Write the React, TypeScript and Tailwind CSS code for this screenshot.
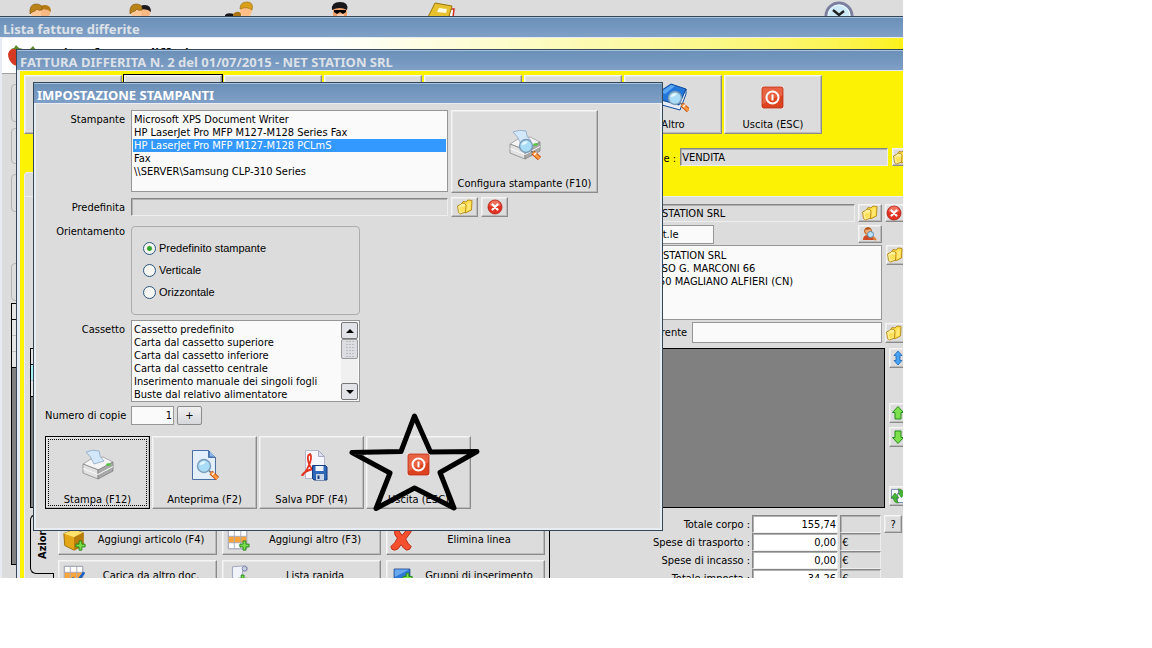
import type { ReactNode } from 'react'
import { clsx } from 'clsx'
import { useState } from 'react'

const PRINTERS = [
  'Microsoft XPS Document Writer',
  'HP LaserJet Pro MFP M127-M128 Series Fax',
  'HP LaserJet Pro MFP M127-M128 PCLmS',
  'Fax',
  '\\\\SERVER\\Samsung CLP-310 Series',
]

const TRAYS = [
  'Cassetto predefinito',
  'Carta dal cassetto superiore',
  'Carta dal cassetto inferiore',
  'Carta dal cassetto centrale',
  'Inserimento manuale dei singoli fogli',
  'Buste dal relativo alimentatore',
]

const ORIENTATIONS = ['Predefinito stampante', 'Verticale', 'Orizzontale']

const TOTALS = [
  { label: 'Totale corpo :', value: '155,74', unit: '' },
  { label: 'Spese di trasporto :', value: '0,00', unit: '€' },
  { label: 'Spese di incasso :', value: '0,00', unit: '€' },
  { label: 'Totale imposta :', value: '34,26', unit: '€' },
]

/* ---------- icons ---------- */

function FolderIcon() {
  return (
    <svg viewBox="0 0 16 16" className="size-4 shrink-0">
      <path d="M4.500 5L6 2.500l3 .5 2-2 4 .5-.5 9.500-6 3z" fill="#ffdc4a" stroke="#b5860f" strokeWidth=".9" />
      <path d="M.5 7l3-1.500L5 4l2.500.5L9 6l-.5 7-5 2-2-1.500z" fill="#fff09a" stroke="#b5860f" strokeWidth=".9" />
      <path d="M2.500 8.500L8 7v5l-4.500 1.500z" fill="#ffe25c" />
      <path d="M10.500 4.500l3-2-.5 8-3 1.500z" fill="#ffe873" />
    </svg>
  )
}

function CancelIcon() {
  return (
    <svg viewBox="0 0 16 16" className="size-4 shrink-0">
      <circle cx="8" cy="8" r="7" fill="#e33222" stroke="#b01c10" strokeWidth=".8" />
      <path d="M2.500 6.500a5.500 5 0 0 1 11 0q-5.500 2.500-11 0z" fill="#f58a78" opacity=".7" />
      <path d="M5.500 5.500l5 5M10.500 5.500l-5 5" stroke="#fff" strokeWidth="2.200" strokeLinecap="round" />
    </svg>
  )
}

function PowerIcon() {
  return (
    <svg viewBox="0 0 32 32" className="size-8">
      <rect x="4" y="4" width="23" height="23" rx="2.500" fill="#fff" />
      <rect x="5" y="5" width="21" height="21" rx="1.500" fill="#de4320" stroke="#b5321a" />
      <path d="M5.500 5.500h20v8q-10 2-20 9z" fill="#ee7a5c" opacity=".6" />
      <circle cx="15.500" cy="15.500" r="6" fill="none" stroke="#fff" strokeWidth="2" />
      <path d="M15.500 12.500v6" stroke="#fff" strokeWidth="2" />
    </svg>
  )
}

function PrinterBody() {
  return (
    <>
      <path d="M1 15l8-5 12-2 10 5-14 8z" fill="#f5f5f5" stroke="#9a9a9a" strokeWidth=".8" />
      <path d="M4 3q7-3 13-1 0 6 5 10l-10 3Q9 7 4 3z" fill="#d3e7fa" stroke="#8aa6c4" strokeWidth=".8" />
      <path d="M1 15l15 6v9L1 24z" fill="#e2e2e2" stroke="#888" strokeWidth=".8" />
      <path d="M16 21l15-8v9l-15 8z" fill="#a9a9a9" stroke="#808080" strokeWidth=".8" />
      <path d="M1 19.500l15 6 15-8" fill="none" stroke="#fafafa" />
      <ellipse cx="26.500" cy="15.500" rx="2.400" ry="1.300" fill="#4fc83a" />
    </>
  )
}

function Lens({ x = 16, y = 17 }: { x?: number, y?: number }) {
  return (
    <g transform={`translate(${x} ${y})`}>
      <path d="M5 5l2.500 1.500" stroke="#777" strokeWidth="2" />
      <path d="M7 6.500l6.500 6" stroke="#c8500d" strokeWidth="4.600" />
      <path d="M7 6.500l6.500 6" stroke="#ff9b42" strokeWidth="2.800" />
      <path d="M8 9l2.500-2.500" stroke="#fff" strokeWidth="1.300" />
      <circle r="6.500" fill="#a9dcf6" stroke="#7b9bb8" strokeWidth="1.400" />
      <path d="M-4.500-1A5 5 0 0 1 2-4.500Q0-1-4.500-1z" fill="#e6f7ff" />
    </g>
  )
}

function PrinterIcon() {
  return <svg viewBox="0 0 32 32" className="size-8"><PrinterBody /></svg>
}

function PrinterSearchIcon() {
  return (
    <svg viewBox="0 0 32 32" className="size-8">
      <PrinterBody />
      <Lens x={17} y={17} />
    </svg>
  )
}

function PreviewIcon() {
  return (
    <svg viewBox="0 0 32 32" className="size-8">
      <path d="M3.500 1.500h16l7 7v22h-23z" fill="#e3effb" stroke="#4c6fa5" />
      <path d="M19.500 1.500v7h7z" fill="#4f82c4" stroke="#4c6fa5" />
      <path d="M21 2v5l5 1z" fill="#8eb5e4" />
      <Lens x={15} y={17} />
    </svg>
  )
}

function PdfIcon() {
  return (
    <svg viewBox="0 0 32 32" className="size-8">
      <path d="M9.500 1.500h13l6 6v22h-19z" fill="#f5f6fc" stroke="#b5b7cc" />
      <path d="M22.500 1.500v6h6z" fill="#dcdded" stroke="#a9abc4" />
      <path d="M13 6c-1.500 0-1.500 5 0 9s4 6 6 6M14 5c3 3-1 14-7 21M6 26q4-5 12-6" fill="none" stroke="#e4321d" strokeWidth="1.800" strokeLinecap="round" />
      <path d="M16.500 16.500h13l1.500 1.500v13H18l-1.500-1.500z" fill="#2f66b5" stroke="#163c7c" />
      <path d="M19.500 17h8v5h-8z" fill="#eef4fd" />
      <path d="M20 25h8v6h-8z" fill="#c9d5e6" />
      <path d="M21.500 26.500h2V30h-2z" fill="#163c7c" />
    </svg>
  )
}

function BookSearchIcon() {
  return (
    <svg viewBox="0 0 32 32" className="size-8">
      <path d="M2 10L14 2l15 5-7 16L4 18z" fill="#2377d8" stroke="#0f4c9c" />
      <path d="M4 18l18 5 7-16v5l-6 16-18-5z" fill="#e6edf8" stroke="#0f4c9c" />
      <path d="M4 10l10-7 4 1-10 8z" fill="#5ba7f5" />
      <Lens x={18} y={16} />
    </svg>
  )
}

function PlusMark({ x = 15, y = 14 }: { x?: number, y?: number }) {
  return (
    <path
      transform={`translate(${x} ${y})`}
      d="M3.500 0h3v3.500H10v3H6.500V10h-3V6.500H0v-3h3.500z"
      fill="#7be04a"
      stroke="#25831a"
    />
  )
}

function BoxPlusIcon() {
  return (
    <svg viewBox="0 0 26 26" className="size-6 shrink-0">
      <path d="M2 6l11-4 10 3v14l-10 5L3 19z" fill="#e3a617" stroke="#9b6c08" />
      <path d="M2 6l11-4 10 3-10 5z" fill="#ffe26b" />
      <path d="M13 10l10-5v14l-10 5z" fill="#b87d0c" />
      <PlusMark />
    </svg>
  )
}

function TableGrid() {
  return (
    <>
      <path d="M2.500 2.500h20v20h-20z" fill="#fff" stroke="#8f93a8" />
      <path d="M3 9h19v7H3z" fill="#f8a63c" />
      <path d="M2.500 9h20M2.500 16h20M9 2.500v20M16 2.500v20" stroke="#a6a9bc" fill="none" />
    </>
  )
}

function TablePlusIcon() {
  return (
    <svg viewBox="0 0 26 26" className="size-6 shrink-0">
      <TableGrid />
      <PlusMark />
    </svg>
  )
}

function TableCheckIcon() {
  return (
    <svg viewBox="0 0 26 26" className="size-6 shrink-0">
      <TableGrid />
      <path d="M11 15l5 5 8-11" fill="none" stroke="#1d5fc4" strokeWidth="3" />
    </svg>
  )
}

function ScrollPlusIcon() {
  return (
    <svg viewBox="0 0 26 26" className="size-6 shrink-0">
      <path d="M7 3l12-1q5 0 4 4t-5 1L16 22l-14 0 5-4z" fill="#f1f3fb" stroke="#9ba0bd" />
      <circle cx="20" cy="5" r="2.500" fill="#c9cee4" stroke="#7d83a8" />
      <PlusMark x={13} y={12} />
    </svg>
  )
}

function DeleteIcon() {
  return (
    <svg viewBox="0 0 26 26" className="size-6 shrink-0">
      <path d="M5 3q2-2 4-1l4 6 5-6q4-1 5 2l-6 8q2 5 6 8-1 4-5 4-4-2-6-6-3 6-7 6-4 0-4-4 5-4 7-9-4-4-3-8z" fill="#f6502e" stroke="#b9270f" />
    </svg>
  )
}

function GroupPlusIcon() {
  return (
    <svg viewBox="0 0 26 26" className="size-6 shrink-0">
      <path d="M4.500 5.500h17v11h-17z" fill="#2e78d6" stroke="#123f86" />
      <path d="M5 6h16l-16 8z" fill="#6ba9ee" />
      <PlusMark x={14} y={10} />
    </svg>
  )
}

function PersonSearchIcon() {
  return (
    <svg viewBox="0 0 16 16" className="size-4">
      <path d="M1 14q0-5 5-5t6 5z" fill="#cf4a20" />
      <circle cx="6" cy="5" r="3.500" fill="#f2a96d" stroke="#b85f1d" />
      <path d="M3 4q2-4 6-1z" fill="#a65313" />
      <path d="M10 10l4 4" stroke="#dd7a2b" strokeWidth="2" />
      <circle cx="8.500" cy="8.500" r="3" fill="#b9e3f8" stroke="#5b87ab" />
    </svg>
  )
}

function ArrowIcon({ kind }: { kind: 'both' | 'up' | 'down' }) {
  if (kind === 'both') {
    return (
      <svg viewBox="0 0 16 16" className="size-4 shrink-0">
        <path d="M8 1l4 4.500h-2v5h2L8 15l-4-4.500h2v-5H4z" fill="#48a4f2" stroke="#1a63b8" strokeWidth=".8" />
      </svg>
    )
  }
  return (
    <svg viewBox="0 0 16 16" className={clsx('size-4 shrink-0', kind === 'down' && 'rotate-180')}>
      <path d="M8 1.500l5.500 6H11v6.500H5V7.500H2.500z" fill="#7fe04e" stroke="#258a1b" />
    </svg>
  )
}

function RefreshDocIcon() {
  return (
    <svg viewBox="0 0 16 16" className="size-4 shrink-0">
      <path d="M1.500 1.500h7v9h-7z" fill="#f3f6fd" stroke="#7d90b8" />
      <path d="M7.500 5.500h6v9h-6z" fill="#f3f6fd" stroke="#7d90b8" />
      <path d="M1 10l4-5 4 5H6.500q0 3 2 5-5 0-5-5z" fill="#46b735" stroke="#237a18" strokeWidth=".6" />
      <path d="M8 1q5 0 5 4h2l-3.500 4.500L8 5h2q0-2-2-4z" fill="#46b735" stroke="#237a18" strokeWidth=".6" />
    </svg>
  )
}

function PeopleIcon({ second }: { second: string }) {
  return (
    <svg viewBox="0 0 32 32" className="size-8">
      <circle cx="21" cy="12" r="5.500" fill="#f8b884" />
      <path d="M15 10q0-5 6-5t6 7q-4-4-12-2z" fill={second} />
      <circle cx="12" cy="12" r="5.500" fill="#ffc796" />
      <path d="M6 14q-1-10 6-10t6 6q-4 1-5-1-2 3-5 3z" fill="#b98318" stroke="#7e510a" strokeWidth=".6" />
    </svg>
  )
}

function StackedPeopleIcon() {
  return (
    <svg viewBox="0 0 32 32" className="size-8">
      <path d="M1 15q2-3 9-1v3H1z" fill="#16161a" />
      <path d="M9 14q4-4 8-1v4H9z" fill="#ad7414" />
      <circle cx="22" cy="11" r="6" fill="#ffc088" />
      <path d="M16 9q0-7 7-7t5 8q-5-4-12-1z" fill="#dba01b" stroke="#946405" strokeWidth=".6" />
    </svg>
  )
}

function AgentIcon() {
  return (
    <svg viewBox="0 0 32 32" className="size-8">
      <path d="M9 8h14v8H9z" fill="#f0a06a" />
      <path d="M8 10q-1-8 8-8t7 8q-7-4-15 0z" fill="#17171b" />
      <path d="M10 10h12v2l-3 2-3-2-3 2-3-2z" fill="#000" />
      <path d="M13 15h7" stroke="#fff" />
    </svg>
  )
}

function LedgerIcon() {
  return (
    <svg viewBox="0 0 32 32" className="size-8">
      <path d="M25 9h5l-1 8h-4z" fill="#fff" stroke="#d42b1c" strokeWidth="1.500" />
      <path d="M11 3l17 3-4 14-20-3z" fill="#e8c22e" stroke="#9a7605" />
      <path d="M15 8l8 1-1 4-9-1z" fill="#fffbe0" />
    </svg>
  )
}

function ClockIcon() {
  return (
    <svg viewBox="0 0 32 32" className="size-8">
      <circle cx="16" cy="16" r="13" fill="#cdeaf8" stroke="#7c7f9f" strokeWidth="3" />
      <circle cx="16" cy="16" r="11" fill="none" stroke="#f2fbff" />
      <path d="M10 10l6 5 5-4" fill="none" stroke="#222" strokeWidth="2.500" />
    </svg>
  )
}

function StrawberriesIcon() {
  return (
    <svg viewBox="0 0 34 22" className="h-[22px] w-[34px]">
      <path d="M2 10q2-7 10-5 6 2 4 12-3 6-8 4-6-4-6-11z" fill="#d63a22" />
      <path d="M18 8q6-5 13 0 2 8-6 13-8-3-7-13z" fill="#c7331e" />
      <path d="M5 4l3 0 2-3 3 3 4 1-6 1zM20 5l4 0 3-3 3 4-5 1z" fill="#5e8a2e" />
    </svg>
  )
}

/* ---------- shared controls ---------- */

function TitleBar({ active, children }: { active?: boolean, children: ReactNode }) {
  return (
    <div
      className={clsx(
        'flex h-5 shrink-0 items-center border-t border-[#a9c3de] bg-linear-to-b from-[#6b90b8] to-[#7f9fc6] pt-0.5 pl-[3px] whitespace-nowrap',
        active ? 'text-white' : 'text-[#dde1e8]',
      )}
    >
      <h2 className="font-['Noto_Sans','Tahoma',sans-serif] font-bold text-[13px] leading-4">{children}</h2>
    </div>
  )
}

interface BevelButtonProps {
  children?: ReactNode
  className?: string
  label?: string
}

function BevelButton({ children, className, label }: BevelButtonProps) {
  return (
    <button
      type="button"
      aria-label={label}
      className={clsx(
        'flex shrink-0 items-center border border-t-[#f4f4f4] border-l-[#f4f4f4] border-r-[#8b8b8b] border-b-[#8b8b8b] bg-[#dcdcdc] shadow-[inset_-1px_-1px_#bcbcbc,inset_1px_1px_#e9e9e9]',
        className,
      )}
    >
      {children}
    </button>
  )
}

function BigButton({ icon, text, className }: { icon: ReactNode, text: string, className?: string }) {
  return (
    <BevelButton className={clsx('flex-col justify-end whitespace-nowrap', className)}>
      {icon}
      <span>{text}</span>
    </BevelButton>
  )
}

const INSET = 'border border-t-[#868686] border-l-[#868686] border-r-[#eeeeee] border-b-[#eeeeee] shadow-[inset_1px_1px_#b0b0b0] px-px'
const FLAT = 'border border-[#969696] bg-[#fafafa] px-px'

/* ---------- windows ---------- */

function InvoiceListWindow() {
  return (
    <section className="absolute inset-x-0 top-4 bottom-0 border-t border-[#33475b] bg-[#dcdcdc]">
      <TitleBar>Lista fatture differite</TitleBar>
      <div className="h-full border-t border-l-2 border-[#e8ecf2]">
        <div className="flex h-9 items-start gap-4 border-b border-[#a0a0a0] bg-linear-to-r from-white from-35% to-[#fbf216] pl-1">
          <div className="pt-1.5"><StrawberriesIcon /></div>
          <h1 className="pt-2 font-['Noto_Sans'] font-bold text-[14px] leading-4">Lista fatture differite</h1>
        </div>
        <div className="flex w-40 flex-col pt-2.5 pl-[9px]">
          <div className="h-[38px] rounded border border-[#b4b4b4]" />
          <div className="mt-1.5 h-9 rounded border border-[#b4b4b4]" />
          <div className="mt-2.5 h-[38px] rounded border border-[#b4b4b4]" />
          <div className="mt-[51px] h-[38px] rounded border border-[#b4b4b4]" />
          <div className="mt-0.5 h-[262px] border border-black bg-[#808080]">
            <div className="h-4 border-b border-black bg-[#e4e4e4]" />
            <div className="h-4 border-b border-[#bdbdbd] bg-[#e4e4e4]" />
            <div className="h-4 border-b border-[#bdbdbd] bg-[#e4e4e4]" />
            <div className="h-4 border-b border-black bg-[#e4e4e4]" />
          </div>
        </div>
      </div>
    </section>
  )
}

function ActionButton({ icon, text }: { icon: ReactNode, text: string }) {
  return (
    <BevelButton className="h-[31px] pl-[3px]">
      {icon}
      <span className="flex-1 text-center">{text}</span>
    </BevelButton>
  )
}

function InvoiceWindow() {
  return (
    <section className="absolute top-[49px] -right-1.5 bottom-0 left-4 flex flex-col overflow-hidden border-t border-l border-[#33475b]">
      <TitleBar>FATTURA DIFFERITA N. 2 del 01/07/2015 - NET STATION SRL</TitleBar>
      <div className="flex-1 border-t border-l-3 border-[#e4e9f2] bg-[#fcf203] pt-1 pl-1">
        <div className="flex gap-0.5">
          <BevelButton className="h-[59px] w-[98px]" />
          <BevelButton className="h-[59px] w-[98px] outline outline-black" />
          <BevelButton className="h-[59px] w-[98px]" />
          <BevelButton className="h-[59px] w-[98px]" />
          <BevelButton className="h-[59px] w-[98px]" />
          <BevelButton className="h-[59px] w-[98px]" />
          <BigButton className="h-[59px] w-[98px] gap-1 pb-0.5" icon={<BookSearchIcon />} text="Altro" />
          <BigButton className="h-[59px] w-[98px] gap-1 pb-0.5" icon={<PowerIcon />} text="Uscita (ESC)" />
        </div>

        <div className="mt-[14px] flex items-center justify-end gap-1">
          <label htmlFor="causale" className="pt-0.5">Causale :</label>
          <input id="causale" readOnly value="VENDITA" className={clsx('h-[18px] w-52 bg-[#dcdcdc]', INSET)} />
          <BevelButton label="Scegli causale" className="h-[18px] w-[17px]"><FolderIcon /></BevelButton>
        </div>
        <div className="mt-1.5 h-6 w-40 rounded-t border-t border-l border-[#eeeeee] bg-[#dcdcdc]" />

        <div className="h-full border-t border-l border-[#eeeeee] bg-[#dcdcdc] pt-[7px]">
          <div className="flex items-center justify-end gap-[3px]">
            <input aria-label="Cliente" readOnly value="NET STATION SRL" className={clsx('h-[18px] w-[218px] bg-[#dcdcdc]', INSET)} />
            <BevelButton label="Scegli cliente" className="h-[18px] w-6 justify-center"><FolderIcon /></BevelButton>
            <BevelButton label="Rimuovi cliente" className="h-[18px] w-6"><CancelIcon /></BevelButton>
          </div>
          <div className="mt-[3px] flex justify-end gap-36 pr-[27px]">
            <input aria-label="Titolo" defaultValue="Spett.le" className={clsx('h-[19px] w-[76px]', FLAT)} />
            <BevelButton label="Cerca persona" className="h-[18px] w-6 justify-center"><PersonSearchIcon /></BevelButton>
          </div>
          <div className="mt-px flex justify-end gap-1">
            <textarea
              aria-label="Indirizzo"
              defaultValue={'NET STATION SRL\nCORSO G. MARCONI 66\n12050 MAGLIANO ALFIERI (CN)'}
              className={clsx('h-[75px] w-[244px] resize-none overflow-hidden pt-[3px]', FLAT)}
            />
            <BevelButton label="Scegli indirizzo" className="h-5 w-[23px]"><FolderIcon /></BevelButton>
          </div>
          <div className="mt-0.5 flex items-center justify-end gap-[3px]">
            <label htmlFor="referente" className="pr-0.5">Referente</label>
            <input id="referente" className={clsx('h-[21px] w-[190px]', FLAT)} />
            <BevelButton label="Scegli referente" className="h-5 w-6"><FolderIcon /></BevelButton>
          </div>

          <div className="mt-[5px] flex gap-1 pl-[5px]">
            <div className="h-40 flex-1 border border-black bg-[#808080]">
              <div className="h-4 w-80 border-b border-black bg-[#e4e4e4]" />
              <div className="h-4 w-80 border-b border-[#bdbdbd] bg-[#a5f1f5]" />
              <div className="h-4 w-80 border-b border-black bg-[#e4e4e4]" />
            </div>
            <div className="flex w-5 flex-col">
              <BevelButton label="Sposta" className="h-5"><ArrowIcon kind="both" /></BevelButton>
              <BevelButton label="Su" className="mt-[35px] h-5"><ArrowIcon kind="up" /></BevelButton>
              <BevelButton label="Giù" className="mt-1 h-5"><ArrowIcon kind="down" /></BevelButton>
              <BevelButton label="Aggiorna" className="mt-[39px] h-5"><RefreshDocIcon /></BevelButton>
            </div>
          </div>

          <div className="flex justify-between pl-[5px]">
            <div className="flex pt-1.5">
              <div className="flex w-6 flex-col">
                <div className="flex h-[60px] justify-center rounded-l-md border-y border-l border-black pb-3.5">
                  <span className="rotate-180 font-bold text-[11px] leading-5 [writing-mode:vertical-rl]">
                    Azioni
                  </span>
                </div>
                <div className="ml-1 h-6 border-r border-black" />
              </div>
              <div className="grid grid-cols-[repeat(3,159px)] content-start gap-[5px] border-r border-black px-1 pt-2.5">
                <ActionButton icon={<BoxPlusIcon />} text="Aggiungi articolo (F4)" />
                <ActionButton icon={<TablePlusIcon />} text="Aggiungi altro (F3)" />
                <ActionButton icon={<DeleteIcon />} text="Elimina linea" />
                <ActionButton icon={<TableCheckIcon />} text="Carica da altro doc." />
                <ActionButton icon={<ScrollPlusIcon />} text="Lista rapida" />
                <ActionButton icon={<GroupPlusIcon />} text="Gruppi di inserimento" />
              </div>
            </div>
            <div className="flex gap-[3px] pt-[7px] pr-[7px]">
              <div className="flex flex-col">
                {TOTALS.map(({ label, value, unit }) => (
                  <label key={label} className="flex items-center justify-end gap-0.5">
                    {label}
                    <input readOnly value={value} className={clsx('h-[18px] w-[86px] bg-white text-right', INSET)} />
                    <input readOnly aria-label={`${label} valuta`} value={unit} className={clsx('h-[18px] w-[41px] bg-[#dcdcdc]', INSET)} />
                  </label>
                ))}
              </div>
              <BevelButton className="h-[18px] w-[18px] justify-center">?</BevelButton>
            </div>
          </div>
        </div>
      </div>
    </section>
  )
}

function PrinterDialog() {
  const [printer, setPrinter] = useState(2)
  const [orientation, setOrientation] = useState(0)
  const [copies, setCopies] = useState(1)

  return (
    <section
      role="dialog"
      aria-label="Impostazione stampanti"
      className="absolute top-[82px] left-[33px] w-[630px] border border-[#33475b] bg-[#dcdcdc]"
    >
      <TitleBar active>IMPOSTAZIONE STAMPANTI</TitleBar>
      <div className="border-2 border-t border-[#e9edf3] px-[9px] pt-1.5 pb-[19px]">
        <div className="grid grid-cols-[81px_1fr] gap-x-[5px]">
          <span className="pt-[3px] pr-px text-right">Stampante</span>
          <div className="flex gap-[3px]">
            <ul role="listbox" aria-label="Stampante" className={clsx('h-[82px] w-[317px] pt-0.5', FLAT)}>
              {PRINTERS.map((name, i) => (
                <li
                  key={name}
                  role="option"
                  aria-selected={i === printer}
                  onClick={() => setPrinter(i)}
                  className={clsx('pl-px', i === printer && 'bg-[#3399ff] text-white')}
                >
                  {name}
                </li>
              ))}
            </ul>
            <BigButton
              className="h-[83px] w-[147px] gap-4 pb-0.5"
              icon={<PrinterSearchIcon />}
              text="Configura stampante (F10)"
            />
          </div>

          <label htmlFor="predefinita" className="mt-1 pt-1 pr-px text-right">Predefinita</label>
          <div className="mt-1 flex items-center gap-[3px]">
            <input id="predefinita" readOnly className={clsx('h-[18px] w-[317px] bg-[#dcdcdc]', INSET)} />
            <BevelButton label="Scegli predefinita" className="h-5 w-[27px] justify-center"><FolderIcon /></BevelButton>
            <BevelButton label="Rimuovi predefinita" className="h-5 w-[27px] justify-center"><CancelIcon /></BevelButton>
          </div>

          <span className="mt-2 pr-px text-right">Orientamento</span>
          <fieldset
            aria-label="Orientamento"
            className="mt-[9px] flex h-[89px] w-[229px] flex-col justify-center gap-[9px] rounded border border-[#acacac] pl-[11px] font-['Liberation_Sans']"
          >
            {ORIENTATIONS.map((name, i) => (
              <label key={name} className="flex items-center gap-[3px]">
                <input
                  type="radio"
                  name="orientation"
                  checked={i === orientation}
                  onChange={() => setOrientation(i)}
                  className="size-[13px] appearance-none rounded-full border border-[#2b567f] bg-[#f5f5f1] checked:bg-radial checked:from-[#2fa52b] checked:from-25% checked:to-[#f5f5f1] checked:to-40%"
                />
                {name}
              </label>
            ))}
          </fieldset>

          <span className="mt-[5px] pt-[3px] pr-px text-right">Cassetto</span>
          <div className={clsx('mt-[5px] flex h-[82px] w-[229px] justify-between py-px', FLAT)}>
            <ul role="listbox" aria-label="Cassetto" className="pt-px pl-px">
              {TRAYS.map(name => <li key={name} role="option" aria-selected={false}>{name}</li>)}
            </ul>
            <div className="flex w-[17px] flex-col bg-[#f0f0f0]">
              <button type="button" aria-label="Scorri su" className="flex h-[17px] items-center justify-center rounded-xs border border-[#777] bg-[#e2e3e8]">
                <svg viewBox="0 0 8 4" className="h-1 w-2"><path d="M4 0l4 4H0z" /></svg>
              </button>
              <div className="flex h-5 items-center justify-center rounded-xs border border-[#999] bg-[#dcdde3]">
                <svg viewBox="0 0 8 16" className="h-4 w-2">
                  <path d="M1 0v16M4 0v16M7 0v16" stroke="#9a9a9a" strokeDasharray="1 2" />
                </svg>
              </div>
              <button type="button" aria-label="Scorri giù" className="mt-auto flex h-[17px] items-center justify-center rounded-xs border border-[#777] bg-[#e2e3e8]">
                <svg viewBox="0 0 8 4" className="h-1 w-2"><path d="M0 0h8L4 4z" /></svg>
              </button>
            </div>
          </div>

          <label htmlFor="copie" className="mt-1 pt-[3px] pr-px text-right whitespace-nowrap">Numero di copie</label>
          <div className="mt-1 flex gap-[3px]">
            <input
              id="copie"
              value={copies}
              onChange={e => setCopies(Number(e.target.value) || 1)}
              className={clsx('h-[19px] w-[43px] text-right', FLAT)}
            />
            <button
              type="button"
              onClick={() => setCopies(copies + 1)}
              className="h-[19px] w-[25px] rounded-xs border border-[#8a8a8a] bg-linear-to-b from-[#f0f0f0] to-[#d6d7dc]"
            >
              +
            </button>
          </div>
        </div>

        <div className="mt-[11px] flex gap-0.5">
          <div className="relative">
            <BigButton className="h-[73px] w-[105px] gap-3 pb-0.5 outline -outline-offset-1 outline-black" icon={<PrinterIcon />} text="Stampa (F12)" />
            <div className="pointer-events-none absolute inset-[3px] border border-dotted border-black" />
          </div>
          <BigButton className="h-[73px] w-[105px] gap-3 pb-0.5" icon={<PreviewIcon />} text="Anteprima (F2)" />
          <BigButton className="h-[73px] w-[105px] gap-3 pb-0.5" icon={<PdfIcon />} text="Salva PDF (F4)" />
          <div className="relative">
            <BigButton className="h-[73px] w-[105px] gap-3 pb-0.5" icon={<PowerIcon />} text="Uscita (ESC)" />
            <svg viewBox="0 0 132 100" className="pointer-events-none absolute -top-6 -left-[18px] h-[100px] w-[132px]">
              <path
                d="M66.500 4l16 36 46.500-.5-37 21 14 35.500L66.500 76 28 96.500 42 61 4 40.500l49-1z"
                fill="none"
                stroke="#000"
                strokeWidth="5"
                strokeLinejoin="round"
              />
            </svg>
          </div>
        </div>
      </div>
    </section>
  )
}

export default function App() {
  return (
    <div className="h-screen w-full bg-white">
      <main className="relative h-[89.2vh] w-[78.4vw] overflow-hidden bg-[#dcdcdc] font-['DejaVu_Sans_Condensed','Tahoma',sans-serif] text-[11px] leading-[13px] text-black">
        <nav aria-label="Archivi" className="flex justify-between pr-12 pl-6">
          <div className="flex gap-[68px]">
            <PeopleIcon second="#b47a15" />
            <PeopleIcon second="#1b1b1f" />
            <StackedPeopleIcon />
            <AgentIcon />
            <LedgerIcon />
          </div>
          <ClockIcon />
        </nav>
        <InvoiceListWindow />
        <InvoiceWindow />
        <PrinterDialog />
      </main>
    </div>
  )
}
